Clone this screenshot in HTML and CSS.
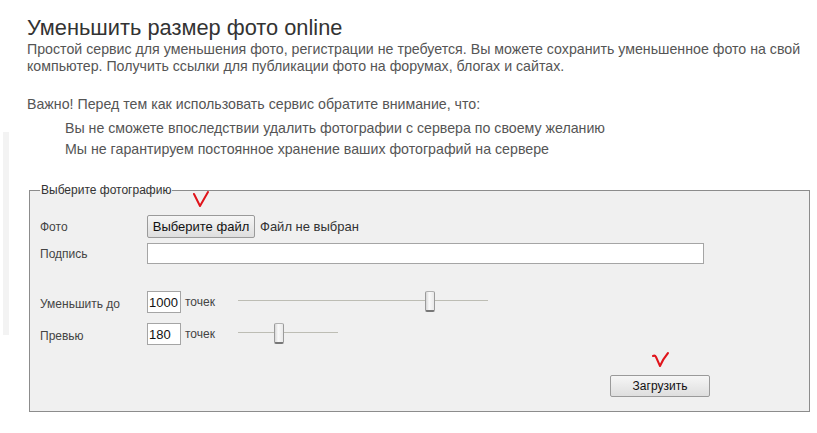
FILE: index.html
```html
<!DOCTYPE html>
<html lang="ru">
<head>
<meta charset="utf-8">
<title>Уменьшить размер фото online</title>
<link rel="stylesheet" href="styles.css">
</head>
<body>
<div class="page">
  <div class="strip"></div>
  <div class="main">
    <h1 class="title">Уменьшить размер фото online</h1>
    <p class="intro">Простой сервис для уменьшения фото, регистрации не требуется. Вы можете сохранить уменьшенное фото на свой компьютер. Получить ссылки для публикации фото на форумах, блогах и сайтах.</p>
    <p class="note">Важно! Перед тем как использовать сервис обратите внимание, что:</p>
    <ul class="warn">
      <li>Вы не сможете впоследствии удалить фотографии с сервера по своему желанию</li>
      <li>Мы не гарантируем постоянное хранение ваших фотографий на сервере</li>
    </ul>
    <fieldset class="box">
      <legend class="legend">Выберите фотографию</legend>
      <div class="row row-file">
        <span class="label">Фото</span>
        <span class="mark-wrap">
          <span class="btn btn-file">Выберите файл</span>
          <svg class="check check-1" width="20" height="18" viewBox="0 0 20 18"><path d="M2 3 L8 15 L16 1" fill="none" stroke="#e0141b" stroke-width="2" stroke-linecap="round" stroke-linejoin="round"/></svg>
        </span>
        <span class="nofile">Файл не выбран</span>
      </div>
      <div class="row row-caption">
        <span class="label">Подпись</span>
        <span class="text-input wide"></span>
      </div>
      <div class="row row-size">
        <span class="label label-low">Уменьшить до</span>
        <span class="num">1000</span>
        <span class="unit">точек</span>
        <span class="slider s-long"><span class="track"></span><span class="thumb" style="left:187px"></span></span>
      </div>
      <div class="row row-preview">
        <span class="label label-low">Превью</span>
        <span class="num">180</span>
        <span class="unit">точек</span>
        <span class="slider s-short"><span class="track"></span><span class="thumb" style="left:36px"></span></span>
      </div>
      <div class="row row-submit">
        <span class="mark-wrap">
          <span class="btn btn-submit">Загрузить</span>
          <svg class="check check-2" width="20" height="18" viewBox="0 0 20 18"><path d="M2 5 Q4 4 5 6 L9 15 Q12 8 17 2" fill="none" stroke="#e0141b" stroke-width="2" stroke-linecap="round" stroke-linejoin="round"/></svg>
        </span>
      </div>
    </fieldset>
  </div>
</div>
</body>
</html>
```
FILE: styles.css
```css
html, body {
  margin: 0;
  padding: 0;
  background: #fff;
}
body {
  font-family: "Liberation Sans", Arial, sans-serif;
  color: #555;
  width: 817px;
  height: 433px;
  overflow: hidden;
}
.page {
  display: flex;
  align-items: flex-start;
}
.strip {
  width: 6px;
  height: 203px;
  margin: 132px 0 0 3px;
  background: #f3f3f3;
  flex: none;
}
.main {
  padding: 15px 0 0 18px;
  flex: 1;
}
.title {
  margin: 0;
  font-size: 21.8px;
  font-weight: normal;
  color: #333;
  line-height: 26px;
}
.intro {
  margin: 0;
  font-size: 14.2px;
  line-height: 17px;
  color: #555;
}
.note {
  margin: 21px 0 0;
  font-size: 14.2px;
  line-height: 17px;
  color: #555;
}
.warn {
  list-style: none;
  margin: 5px 0 0;
  padding: 0 0 0 38px;
  font-size: 14.2px;
  line-height: 21px;
  color: #555;
}
.box {
  margin: 23px 0 0 2px;
  width: 781px;
  height: 229px;
  box-sizing: border-box;
  border: 1px solid #8c8c8c;
  background: #f0f0f0;
  padding: 0 0 0 10px;
  font-family: "Liberation Sans", Arial, sans-serif;
  font-size: 12px;
  color: #444;
}
.legend {
  padding: 0 1px;
  font-size: 12px;
  color: #333;
  line-height: 14px;
}
.row {
  display: flex;
  align-items: center;
}
.label {
  width: 107px;
  flex: none;
  color: #444;
  font-size: 12px;
}
.label-low {
  padding-top: 4px;
}
.row-file {
  margin-top: 18px;
  height: 23px;
}
.row-caption {
  margin-top: 5px;
  height: 21px;
}
.row-size {
  margin-top: 27px;
  height: 22px;
}
.row-preview {
  margin-top: 10px;
  height: 22px;
}
.row-submit {
  margin-top: 30px;
  height: 22px;
  padding-left: 570px;
}
.mark-wrap {
  position: relative;
  display: inline-flex;
}
.btn {
  box-sizing: border-box;
  display: inline-flex;
  align-items: center;
  justify-content: center;
  border: 1px solid #9a9a9a;
  border-radius: 2px;
  background: linear-gradient(#f6f6f6, #dedede);
  color: #111;
  font-size: 13px;
}
.btn-file {
  width: 108px;
  height: 23px;
}
.btn-submit {
  width: 100px;
  height: 22px;
  font-size: 12px;
}
.check {
  position: absolute;
  top: -24px;
}
.check-1 { left: 45px; }
.check-2 { left: 41px; }
.nofile {
  margin-left: 5px;
  font-size: 13px;
  color: #333;
}
.text-input {
  box-sizing: border-box;
  display: block;
  height: 21px;
  border: 1px solid #a5a5a5;
  background: #fff;
}
.wide { width: 557px; }
.num {
  box-sizing: border-box;
  width: 34px;
  height: 22px;
  border: 1px solid #a5a5a5;
  background: #fff;
  font-size: 13px;
  color: #111;
  padding-left: 1px;
  display: flex;
  align-items: center;
}
.unit {
  margin-left: 4px;
  width: 53px;
  font-size: 12px;
  color: #444;
}
.slider {
  position: relative;
  height: 22px;
  display: block;
}
.s-long { width: 250px; }
.s-short { width: 100px; }
.track {
  position: absolute;
  left: 0;
  right: 0;
  top: 9px;
  height: 1px;
  background: #bdbdb4;
}
.thumb {
  position: absolute;
  top: 0;
  width: 10px;
  height: 21px;
  box-sizing: border-box;
  border: 1px solid #9a9a9a;
  border-top-color: #b0b0b0;
  border-bottom: 2px solid #777;
  border-radius: 2px;
  background: linear-gradient(90deg, #d8d8d8, #fafafa 40%, #e8e8e8);
}
```
